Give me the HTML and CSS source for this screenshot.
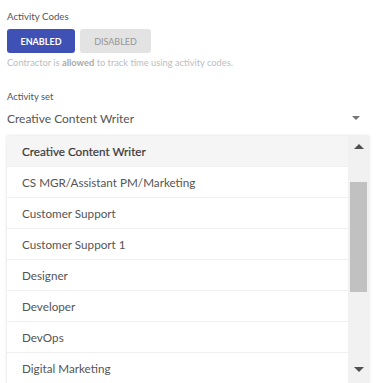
FILE: index.html
```html
<!DOCTYPE html>
<html lang="en">
<head>
  <meta charset="UTF-8">
  <title>Activity Codes</title>
  <link rel="stylesheet" href="styles.css">
</head>
<body>
  <div class="page">
    <div class="field-label">Activity Codes</div>
    <div class="toggle">
      <button class="btn active">ENABLED</button>
      <button class="btn">DISABLED</button>
    </div>
    <div class="hint">Contractor is <b>allowed</b> to track time using activity codes.</div>

    <div class="field-label small">Activity set</div>
    <div class="select">
      <span>Creative Content Writer</span>
      <span class="caret"></span>
    </div>

    <div class="menu">
      <ul class="options">
        <li class="selected">Creative Content Writer</li>
        <li>CS MGR/Assistant PM/Marketing</li>
        <li>Customer Support</li>
        <li>Customer Support 1</li>
        <li>Designer</li>
        <li>Developer</li>
        <li>DevOps</li>
        <li>Digital Marketing</li>
      </ul>
      <div class="scrollbar">
        <span class="arrow up"></span>
        <div class="track"><div class="thumb"></div></div>
        <span class="arrow down"></span>
      </div>
    </div>
  </div>
</body>
</html>
```
FILE: styles.css
```css
body {
  margin: 0;
  padding: 0;
  font-family: Lato, "Open Sans", sans-serif;
  color: #444;
  background: #fff;
  overflow: hidden;
}
.page {
  padding: 9px 7px 0 7px;
}
.field-label {
  font-size: 9.7px;
  line-height: 14px;
  color: #555;
}
.field-label.small {
  font-size: 9.4px;
  margin-top: 21px;
}
.toggle {
  display: flex;
  gap: 5px;
  margin-top: 6px;
}
.btn {
  height: 24px;
  border: none;
  border-radius: 3px;
  font-family: Lato, sans-serif;
  font-size: 9px;
  padding: 0;
  background: #e3e3e3;
  color: #959595;
  width: 71px;
}
.btn.active {
  width: 68px;
  background: #3f51b5;
  color: #fff;
  font-weight: bold;
}
.hint {
  margin-top: 4px;
  font-size: 9.3px;
  line-height: 12px;
  color: #bdbdbd;
}
.hint b {
  color: #aaa;
}
.select {
  display: flex;
  justify-content: space-between;
  align-items: center;
  height: 26px;
  margin-top: 1px;
  font-size: 12px;
  color: #555;
}
.caret {
  width: 0;
  height: 0;
  border-left: 4px solid transparent;
  border-right: 4px solid transparent;
  border-top: 4px solid #757575;
  margin-right: 9px;
}
.menu {
  display: flex;
  margin-top: 5px;
  height: 248px;
  background: #fff;
  box-shadow: 0 0 3px rgba(0, 0, 0, 0.15);
}
.options {
  flex: 1;
  list-style: none;
  margin: 0;
  padding: 0;
}
.options li {
  height: 30px;
  line-height: 30px;
  padding-left: 15px;
  font-size: 11.7px;
  color: #555;
  border-bottom: 1px solid #f0f0f0;
}
.options li.selected {
  background: #f5f5f5;
  color: #3a3a3a;
  -webkit-text-stroke: 0.2px #3a3a3a;
}
.scrollbar {
  width: 21px;
  background: #f1f1f1;
  display: flex;
  flex-direction: column;
  align-items: center;
}
.arrow {
  width: 0;
  height: 0;
  border-left: 5px solid transparent;
  border-right: 5px solid transparent;
}
.arrow.up {
  border-bottom: 5px solid #505050;
  margin-top: 8px;
}
.arrow.down {
  border-top: 5px solid #505050;
  margin-bottom: 12px;
}
.track {
  flex: 1;
  width: 17px;
}
.thumb {
  margin-top: 33px;
  height: 110px;
  background: #c1c1c1;
}
```
